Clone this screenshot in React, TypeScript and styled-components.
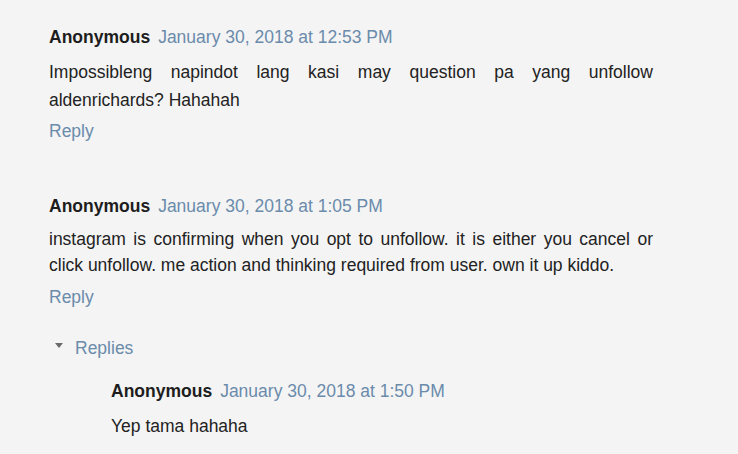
import React from "react";
import styled, { createGlobalStyle } from "styled-components";

const Global = createGlobalStyle`
  html, body { margin: 0; padding: 0; background: #f4f4f4; }
  body { font-family: "Liberation Sans", Arial, sans-serif; }
`;

const Page = styled.div`
  width: 738px;
  height: 454px;
  box-sizing: border-box;
  padding: 24px 85px 0 49px;
  overflow: hidden;
  background: #f4f4f4;
  color: #222;
  font-size: 17.5px;
`;

const Comment = styled.div<{ $gap?: number }>`
  display: flex;
  flex-direction: column;
  margin-bottom: ${(p) => p.$gap ?? 0}px;
`;

const Header = styled.div`
  display: flex;
  align-items: baseline;
  line-height: 27px;
  white-space: nowrap;
`;

const Author = styled.span`
  font-weight: bold;
  color: #1d1d1d;
`;

const DateLink = styled.span`
  margin-left: 8px;
  color: #6b8bab;
`;

const Body = styled.p<{ $lh?: number; $top?: number }>`
  margin: ${(p) => p.$top ?? 8}px 0 0;
  line-height: ${(p) => p.$lh ?? 27}px;
  text-align: justify;
  color: #222;
`;

const ReplyLink = styled.span<{ $top?: number }>`
  margin-top: ${(p) => p.$top ?? 4}px;
  line-height: 27px;
  color: #6b8bab;
`;

const RepliesToggle = styled.div`
  display: flex;
  align-items: center;
  margin: 24px 0 0 6px;
  line-height: 27px;
  color: #6b8bab;
`;

const Caret = styled.span`
  width: 0;
  height: 0;
  border-left: 4px solid transparent;
  border-right: 4px solid transparent;
  border-top: 5px solid #6a6a6a;
  margin: -6px 12px 0 0;
`;

const Thread = styled.div`
  margin: 16px 0 0 62px;
`;

export default function App() {
  return (
    <>
      <Global />
      <Page>
        <Comment $gap={48}>
          <Header>
            <Author>Anonymous</Author>
            <DateLink>January 30, 2018 at 12:53 PM</DateLink>
          </Header>
          <Body $lh={28} $top={7}>
            Impossibleng napindot lang kasi may question pa yang unfollow
            aldenrichards? Hahahah
          </Body>
          <ReplyLink>Reply</ReplyLink>
        </Comment>
        <Comment>
          <Header>
            <Author>Anonymous</Author>
            <DateLink>January 30, 2018 at 1:05 PM</DateLink>
          </Header>
          <Body $lh={26} $top={6}>
            instagram is confirming when you opt to unfollow. it is either you
            cancel or click unfollow. me action and thinking required from user.
            own it up kiddo.
          </Body>
          <ReplyLink $top={6}>Reply</ReplyLink>
          <RepliesToggle>
            <Caret />
            Replies
          </RepliesToggle>
          <Thread>
            <Comment>
              <Header>
                <Author>Anonymous</Author>
                <DateLink>January 30, 2018 at 1:50 PM</DateLink>
              </Header>
              <Body>Yep tama hahaha</Body>
            </Comment>
          </Thread>
        </Comment>
      </Page>
    </>
  );
}
